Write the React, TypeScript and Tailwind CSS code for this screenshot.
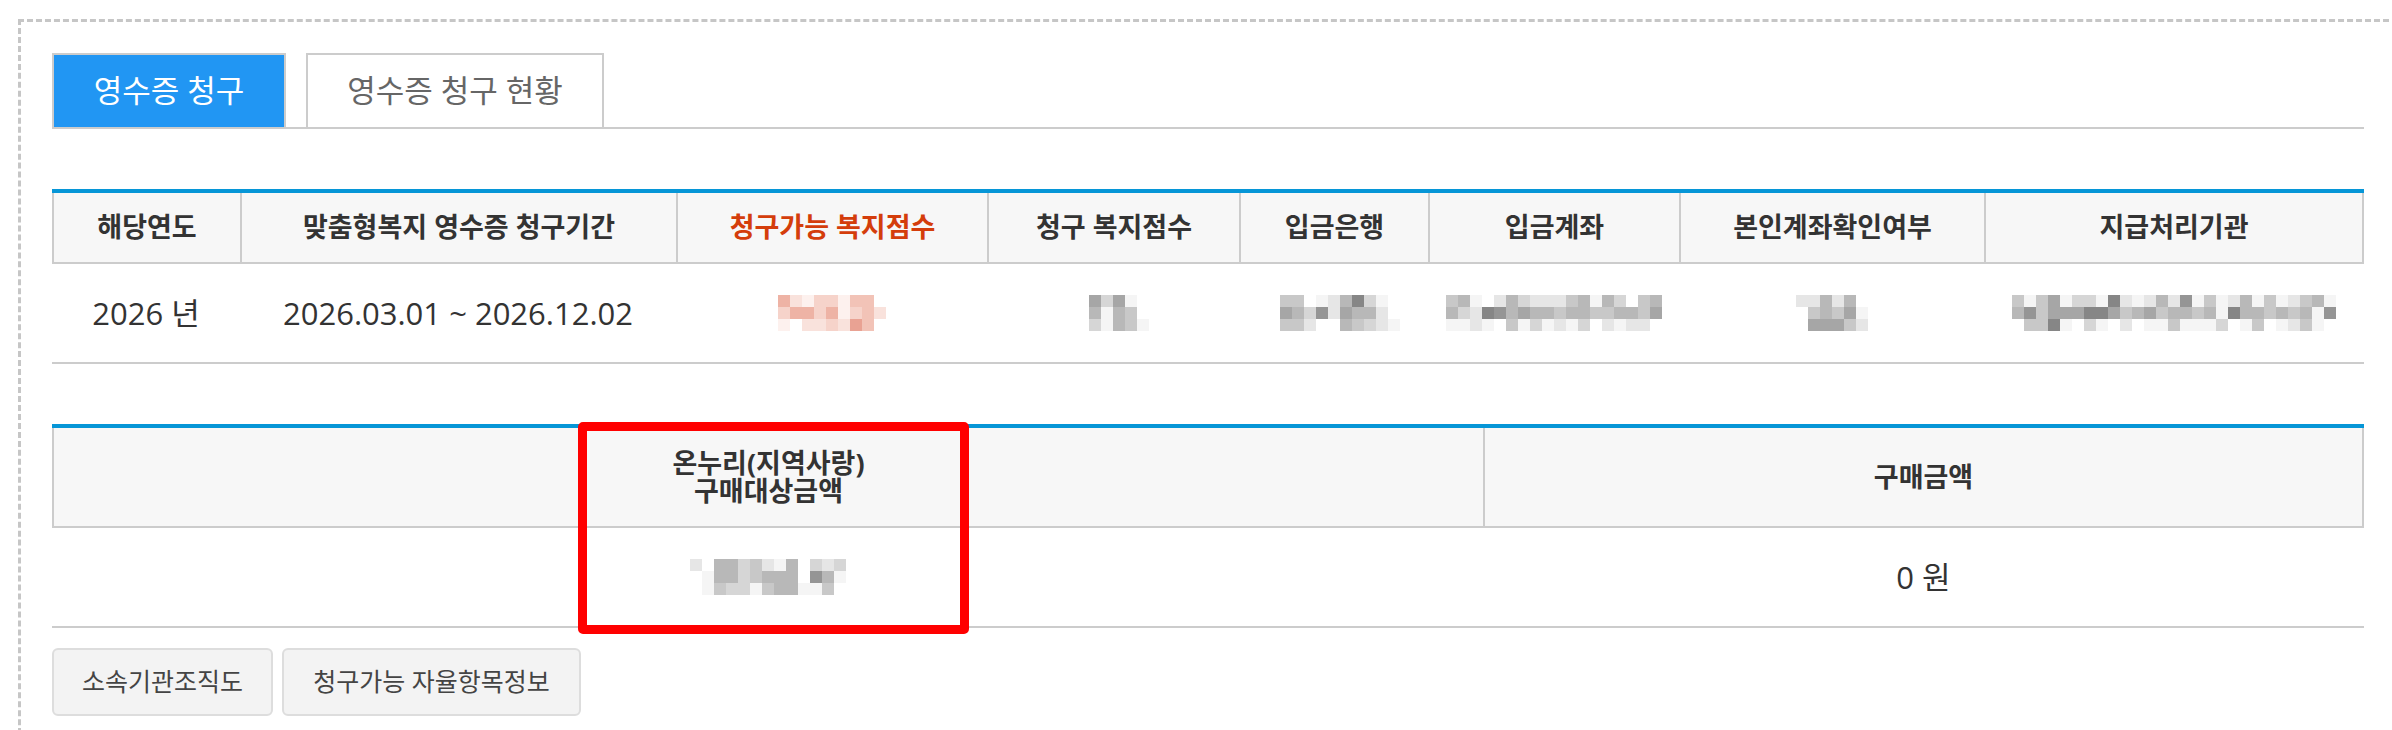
import React from 'react'

// mosaic shades, index 0 = empty
const GRAY = ['transparent', '#f5f5f5', '#e6e6e6', '#d6d6d6', '#c8c8c8', '#b8b8b8', '#a6a6a6', '#959595', '#868686', '#777777']
const RED = ['transparent', '#fdf1ee', '#f9e2dc', '#f6d3ca', '#f2c3b7', '#eeb3a5', '#e9a293', '#e59383', '#e08573', '#db7763']

function Mosaic({ rows, red = false }: { rows: string[]; red?: boolean }) {
  const palette = red ? RED : GRAY
  const cols = rows[0].length
  return (
    <svg width={cols * 12} height={rows.length * 12} className="block">
      {rows.map((row, y) =>
        row.split('').map((c, x) =>
          c === '0' ? null : (
            <rect key={`${x}-${y}`} x={x * 12} y={y * 12} width={12} height={12} fill={palette[Number(c)]} />
          ),
        ),
      )}
    </svg>
  )
}

const heads = [
  { label: '해당연도' },
  { label: '맞춤형복지 영수증 청구기간' },
  { label: '청구가능 복지점수', red: true },
  { label: '청구 복지점수' },
  { label: '입금은행' },
  { label: '입금계좌' },
  { label: '본인계좌확인여부' },
  { label: '지급처리기관' },
]

const masks: { rows: string[]; red?: boolean }[] = [
  { rows: ['05213314400', '03553513420', '01022326400'], red: true },
  { rows: ['063610', '051540', '031541'] },
  { rows: ['04401258310', '06537265520', '04420054321'] },
  { rows: ['451025322245153045', '532875655455445546', '112104131213021220'] },
  { rows: ['225250', '045461', '066642'] },
  {
    rows: ['414613318212527141251412451', '574666886456455451855454517', '044810310201141113014012410'],
  },
]

const headCell =
  'flex items-center justify-center border-b-2 border-l-2 border-[#cccccc] bg-[#f7f7f7] text-[27px] font-bold text-[#333]'
const bodyCell = 'flex h-[100px] items-center justify-center border-b-2 border-[#cccccc] text-[31px] text-[#333]'

export default function App() {
  return (
    <div className="h-[730px] overflow-hidden bg-white pl-[18px] pt-[19px] font-['Open_Sans','Noto_Sans_CJK_KR',sans-serif]">
      <div className="min-h-[760px] w-[2380px] border-[3px] border-dashed border-[#c6c6c6] px-[31px] pt-[31px]">
        {/* ---- Tabs ---- */}
        <div className="flex gap-[20px] border-b-2 border-[#cccccc]">
          <button className="flex h-[74px] w-[234px] items-center justify-center border-2 border-b-0 border-[#cccccc] bg-[#2196f3] pb-[2px] text-[31px] text-white">
            영수증 청구
          </button>
          <button className="flex h-[74px] w-[298px] items-center justify-center border-2 border-b-0 border-[#cccccc] bg-white pb-[2px] text-[31px] text-[#666]">
            영수증 청구 현황
          </button>
        </div>

        {/* ---- Welfare point table ---- */}
        <div className="mt-[60px] border-t-4 border-[#0696d7]">
          <div className="grid grid-cols-[188px_436px_311px_252px_189px_251px_305px_380px]">
            {heads.map((h, i) => (
              <div
                key={h.label}
                className={`${headCell} h-[71px] ${i === heads.length - 1 ? 'border-r-2' : ''} ${
                  h.red ? 'text-[#d43d0b]' : ''
                }`}
              >
                {h.label}
              </div>
            ))}
            <div className={bodyCell}>2026 년</div>
            <div className={bodyCell}>2026.03.01 ~ 2026.12.02</div>
            {masks.map((m, i) => (
              <div key={i} className={bodyCell}>
                <Mosaic rows={m.rows} red={m.red} />
              </div>
            ))}
          </div>
        </div>

        {/* ---- Onnuri purchase table ---- */}
        <div className="relative mt-[60px] border-t-4 border-[#0696d7]">
          <div className="grid grid-cols-[1431px_881px]">
            <div className={`${headCell} h-[100px] flex-col leading-[28px]`}>
              <span>온누리(지역사랑)</span>
              <span>구매대상금액</span>
            </div>
            <div className={`${headCell} h-[100px] border-r-2`}>구매금액</div>
            <div className={bodyCell}>
              <Mosaic rows={['2055342150323', '0155345550751', '0143314551140']} />
            </div>
            <div className={bodyCell}>0 원</div>
          </div>

          {/* highlight box */}
          <div className="pointer-events-none absolute left-[526px] top-[-6px] h-[212px] w-[391px] rounded-[5px] border-[9px] border-[#ff0000]" />
        </div>

        {/* ---- Buttons ---- */}
        <div className="mt-[20px] flex gap-[9px]">
          <button className="h-[68px] w-[221px] rounded-[6px] border-2 border-[#dddddd] bg-[#f3f3f3] text-[25px] text-[#444]">
            소속기관조직도
          </button>
          <button className="h-[68px] w-[299px] rounded-[6px] border-2 border-[#dddddd] bg-[#f3f3f3] text-[25px] text-[#444]">
            청구가능 자율항목정보
          </button>
        </div>
      </div>
    </div>
  )
}
